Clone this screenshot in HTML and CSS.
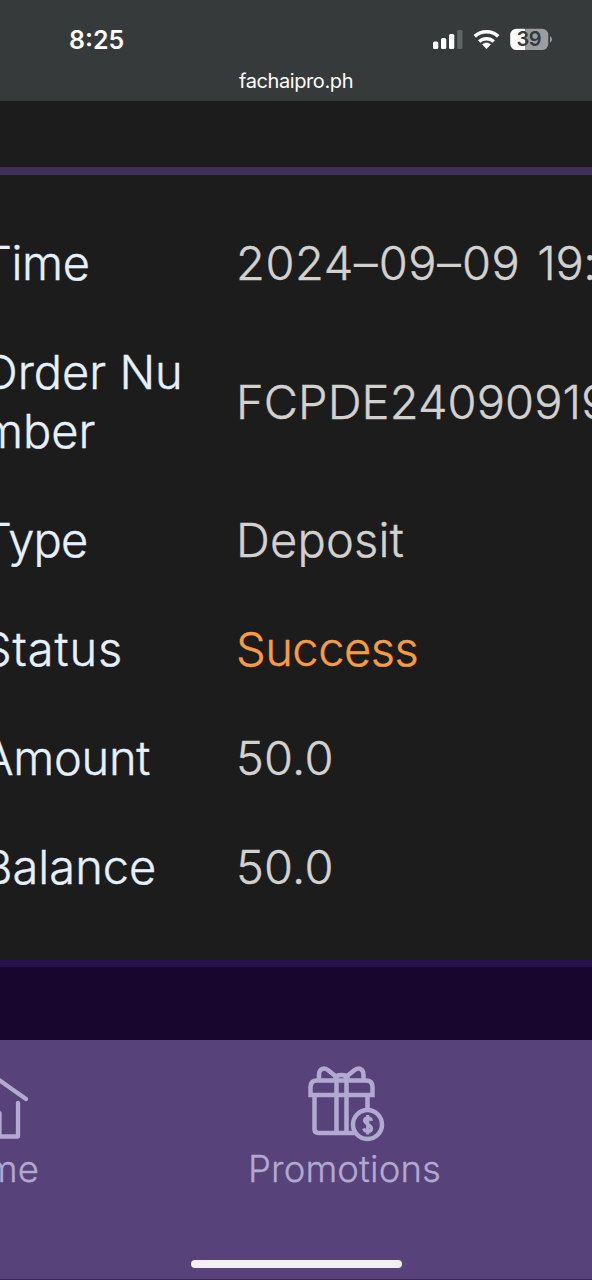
FILE: index.html
```html
<!DOCTYPE html>
<html lang="en">
<head>
<meta charset="utf-8">
<title>fachaipro.ph</title>
<link rel="stylesheet" href="styles.css">
</head>
<body>
<header class="top">
  <div class="status">
    <span class="clock">8:25</span>
    <svg class="indicators" width="122" height="28" viewBox="0 0 122 28">
      <g fill="#fff">
        <rect x="3" y="15.500" width="5.300" height="7.500" rx="1.500"/>
        <rect x="11" y="12" width="5.300" height="11" rx="1.500"/>
        <rect x="19" y="8" width="5.300" height="15" rx="1.500"/>
        <rect x="27.200" y="4" width="5.300" height="19" rx="1.500" opacity=".22"/>
        <path d="M56.500 22.700l-4-4.300c2.300-2 5.700-2 8 0z" stroke="#fff" stroke-width=".6" stroke-linejoin="round"/>
      </g>
      <g fill="none" stroke="#fff" stroke-width="3.500">
        <path d="M44.800 10.400a17.200 17.200 0 0 1 23.400 0"/>
        <path d="M49.200 15.600a10.600 10.600 0 0 1 14.600 0"/>
      </g>
      <path d="M86.500 2.700H95V24h-8.500a6.300 6.300 0 0 1-6.300-6.300V9a6.300 6.300 0 0 1 6.300-6.300z" fill="#fff"/>
      <path d="M95 2.700h17a6.300 6.300 0 0 1 6.300 6.300v8.700a6.300 6.300 0 0 1-6.300 6.300H95z" fill="#9b9d9e"/>
      <path d="M120 10.300c2.600 1 2.600 5.200 0 6.200z" fill="#9b9d9e"/>
      <text class="battery" x="99" y="20.300" text-anchor="middle" textLength="25">39</text>
    </svg>
  </div>
  <div class="address">fachaipro.ph</div>
</header>
<main class="record">
  <dl class="rows">
    <dt class="label time">Time</dt><dd class="value date">2024<span class="dash">–</span>09<span class="dash">–</span>09 <span class="hour">19:</span></dd>
    <dt class="label order">Order Nu<br>mber</dt><dd class="value number">FCPDE24090919</dd>
    <dt class="label type">Type</dt><dd class="value">Deposit</dd>
    <dt class="label state">Status</dt><dd class="value success">Success</dd>
    <dt class="label amount">Amount</dt><dd class="value">50.0</dd>
    <dt class="label">Balance</dt><dd class="value">50.0</dd>
  </dl>
</main>
<nav class="tabs">
  <a class="tab home">
    <svg width="72" height="76" viewBox="0 0 72 76" fill="none" stroke="#b2a9d2" stroke-width="4.300" stroke-linecap="round" stroke-linejoin="round">
      <path d="M-2 34L34 7.500L70 33M62 37V70.500H43.500V47H24.500V70.500H6V37"/>
    </svg>
    <span class="tab-name">Home</span>
  </a>
  <a class="tab promo">
    <svg width="80" height="80" viewBox="0 0 80 80" fill="none" stroke="#b2a9d2" stroke-width="4.500" stroke-linejoin="miter">
      <path d="M4.500 32V22Q4.500 15.500 11 15.500H60Q66.500 15.500 66.500 22V30M2.300 30H68.700M8.500 30V64Q8.500 68 12.500 68H49M61.500 30V46M30.500 16V67M40.500 16V67"/>
      <path d="M13 14V10C13 3 18.500 2 22.500 5.500L32.500 13.500M57.500 14V10C57.500 3 52 2 48 5.500L38 13.500M29 14Q29.500 10 35.500 10T42 14"/>
      <circle cx="61.500" cy="59.500" r="14.500"/>
      <path stroke-width="3.200" d="M65.500 55.800C64.500 52 58.500 52 58.500 55.600S65.500 59.500 65.500 63.400 58.500 67.400 57.700 63.400M61.700 50V69.500"/>
    </svg>
    <span class="tab-name">Promotions</span>
  </a>
  <div class="grip"></div>
</nav>
</body>
</html>
```
FILE: styles.css
```css
* { box-sizing: border-box; }
body {
  margin: 0;
  width: 592px;
  height: 1280px;
  overflow: hidden;
  display: flex;
  flex-direction: column;
  background: #19062e;
  font-family: Inter, "Liberation Sans", sans-serif;
}
.top {
  height: 101px;
  flex: none;
  background: #363a3b;
  color: #fff;
}
.status {
  display: flex;
  justify-content: space-between;
  align-items: center;
  height: 66px;
  padding: 14px 40px 0 69px;
}
.clock { font-size: 25px; font-weight: 600; line-height: 30px; }
.indicators { flex: none; margin-top: -1px; }
.battery { font-size: 20px; font-weight: 600; fill: #363a3b; }
.address { text-align: center; font-size: 20px; line-height: 30px; letter-spacing: -.4px; }
.record {
  flex: none;
  height: 866px;
  padding-top: 66px;
  background: #1c1c1c;
  border-bottom: 7px solid #27124d;
}
.rows {
  margin: 0 0 0 -18px;
  padding-top: 34px;
  border-top: 8px solid #3e3158;
  display: grid;
  grid-template-columns: 254px 1fr;
  align-items: center;
  font-size: 47px;
  font-weight: 300;
  line-height: 58.5px;
  -webkit-text-stroke: .4px currentColor;
  white-space: nowrap;
}
.label, .value { margin: 0; padding: 25.250px 0; }
.label { color: #e6f0ff; }
.value { color: #d2d1d0; letter-spacing: .2px; }
.time { letter-spacing: -.4px; }
.type { letter-spacing: -.8px; }
.state { letter-spacing: .9px; }
.amount { letter-spacing: -.3px; }
.date { letter-spacing: .6px; }
.dash { letter-spacing: 1.2px; }
.hour { margin-left: 3px; letter-spacing: -.3px; }
.number { letter-spacing: .1px; }
.success { color: #fb9b40; letter-spacing: -.5px; }
.tabs {
  flex: none;
  height: 240px;
  margin-top: 73px;
  background: #574279;
  border-bottom: 1px solid #3a2b54;
  display: grid;
  grid-template-columns: 98px 492px;
  grid-template-rows: 220px 8px;
}
.tab { display: flex; flex-direction: column; align-items: center; color: #b2a9d2; }
.home { padding-top: 26px; width: 98px; margin-left: -61px; }
.promo { padding-top: 25px; }
.home svg { margin-left: 7px; margin-bottom: 5px; flex: none; overflow: visible; }
.promo svg { flex: none; margin: 0 0 2px 3px; }
.tab-name { font-size: 36.5px; line-height: 44px; font-weight: 300; letter-spacing: .1px; -webkit-text-stroke: .3px currentColor; }
.promo .tab-name { margin-left: 1px; }
.grip { grid-column: 1 / 3; justify-self: center; width: 211px; height: 8px; margin-left: 3px; border-radius: 4px; background: #f1eff2; }
```
